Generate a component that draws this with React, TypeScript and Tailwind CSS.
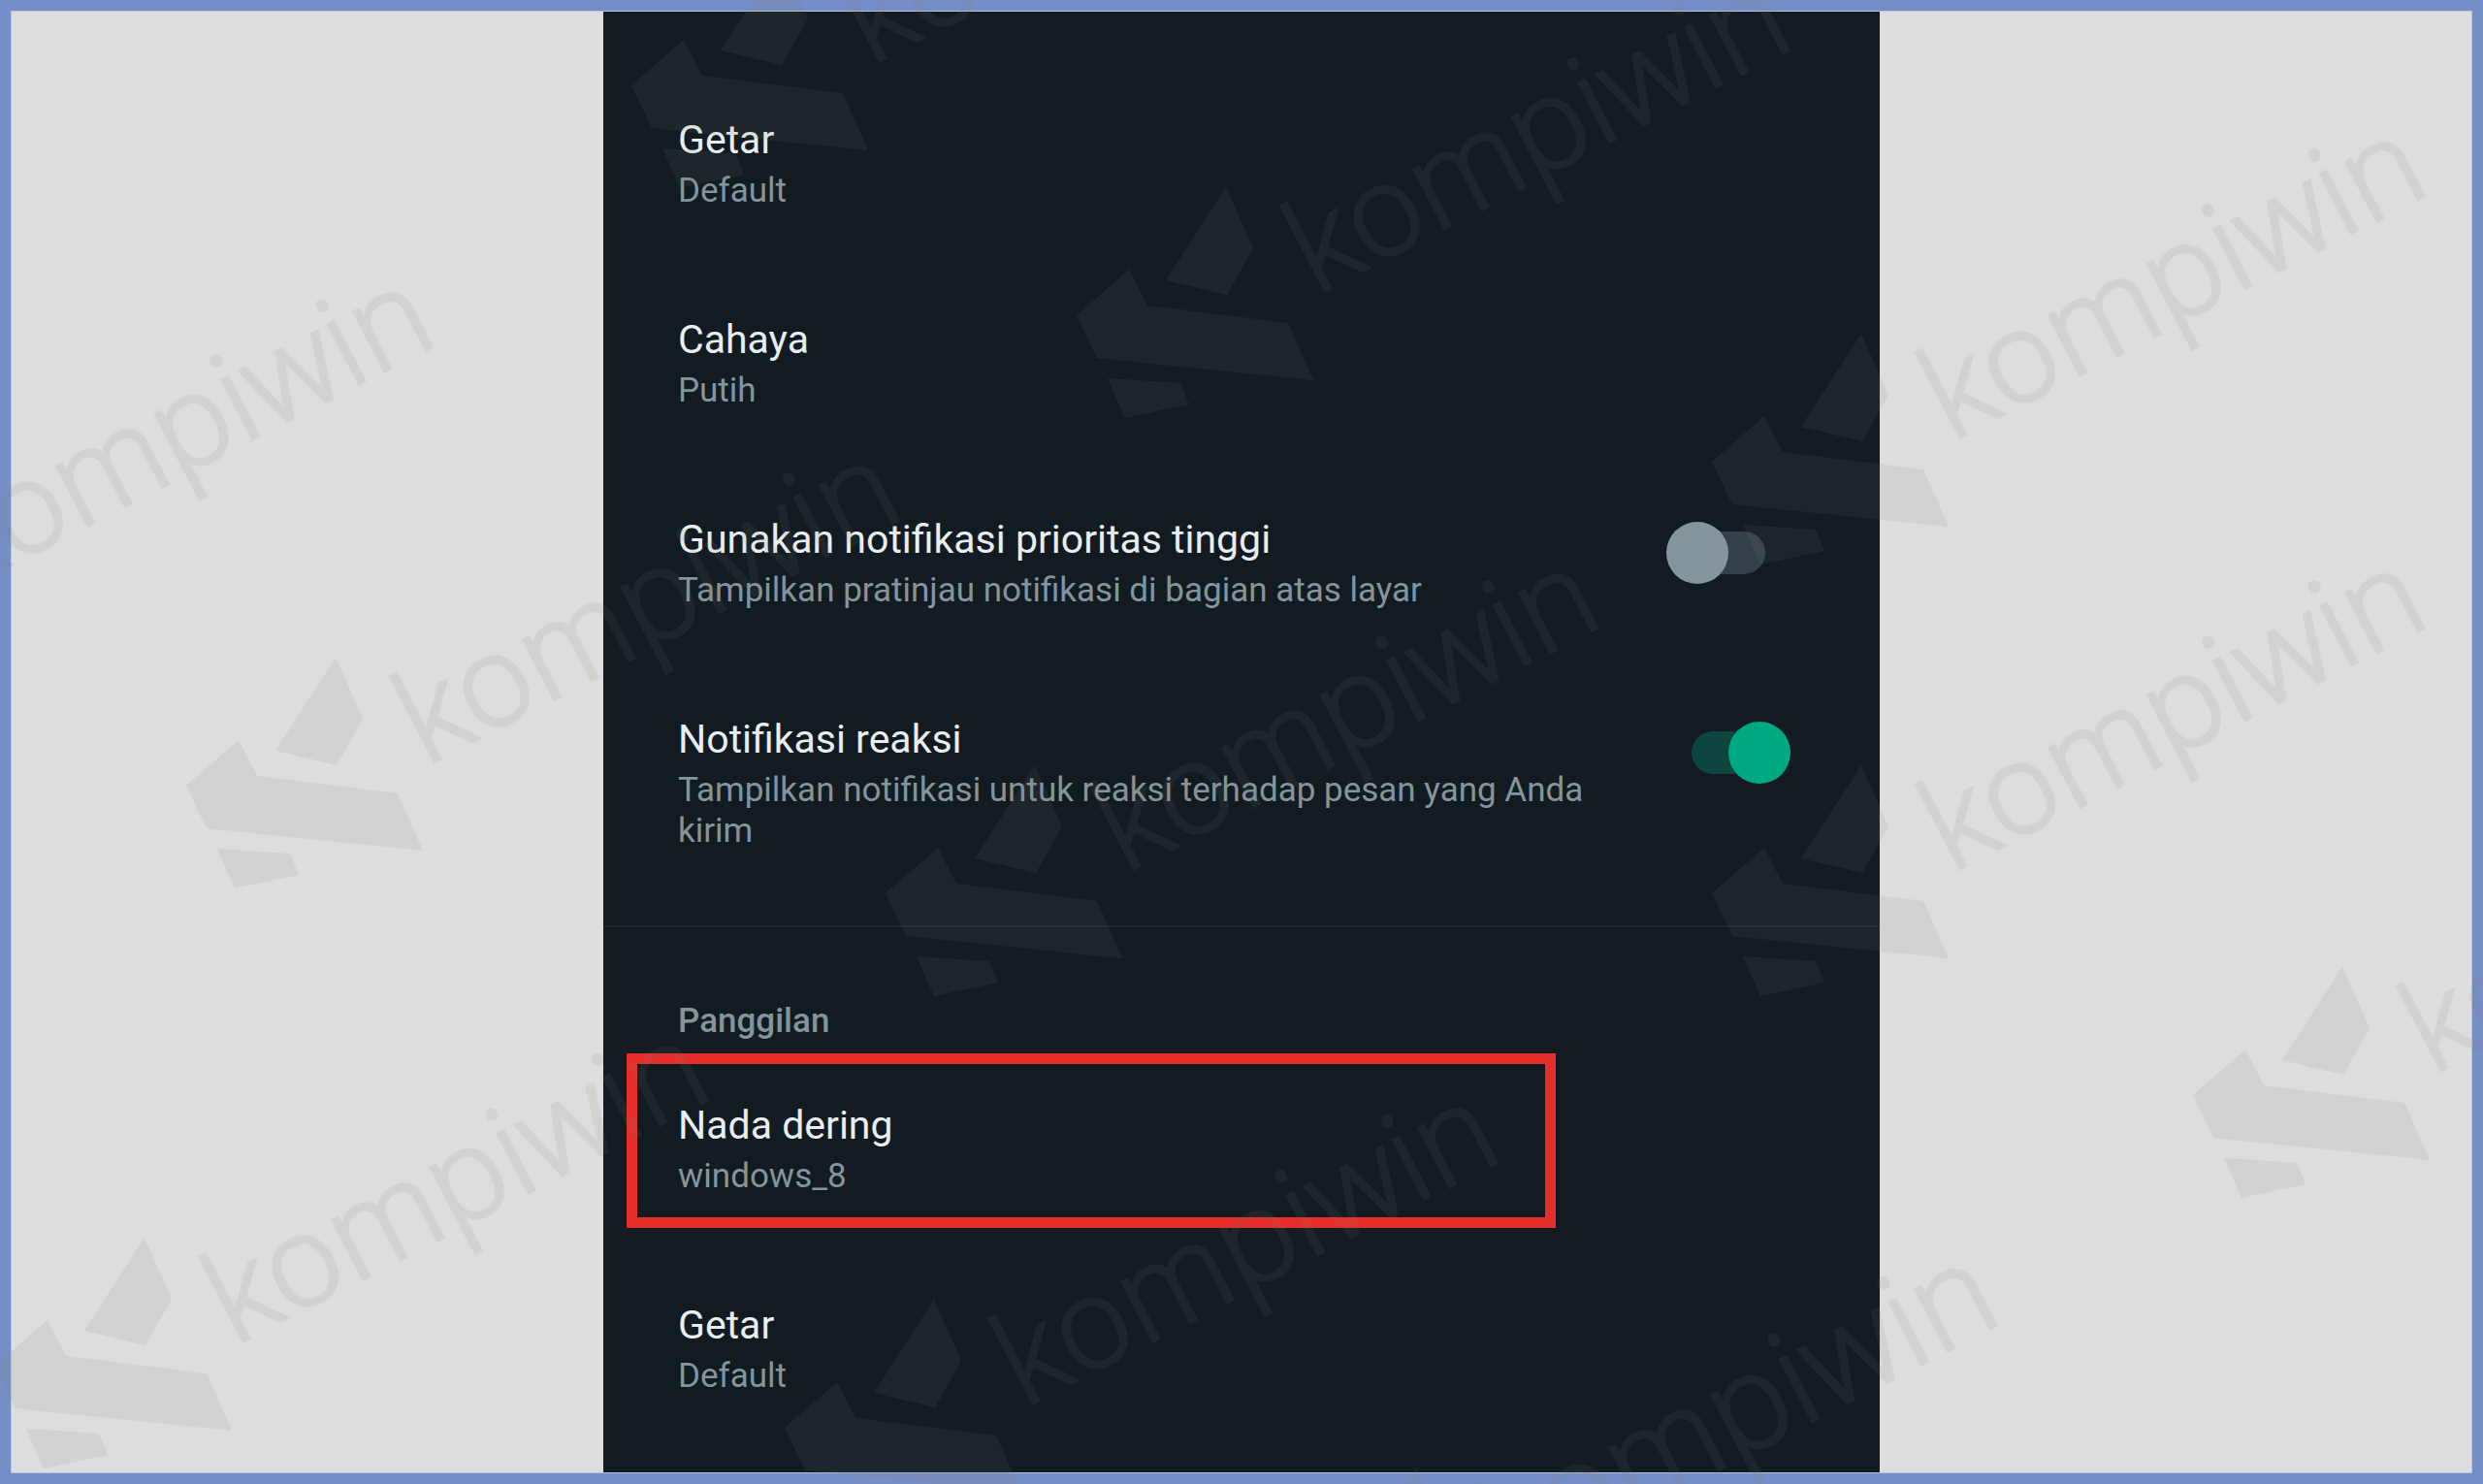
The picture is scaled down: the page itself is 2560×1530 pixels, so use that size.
import React, { useState } from 'react';

const marks = [
  { x: 805, y: -44, scale: 1 },
  { x: 1264, y: 193, scale: 1 },
  { x: -135, y: 499, scale: 1 },
  { x: 1919, y: 344, scale: 1 },
  { x: 346, y: 678, scale: 1 },
  { x: 1067, y: 789, scale: 1 },
  { x: 1919, y: 789, scale: 1 },
  { x: 2415, y: 997, scale: 1 },
  { x: 149, y: 1276, scale: 1 },
  { x: 963, y: 1340, scale: 1 },
  { x: 1461, y: 1513, scale: 1.03 },
];

const Watermark = () => (
  <svg
    aria-hidden="true"
    className="pointer-events-none absolute inset-0 w-full h-full"
    viewBox="0 0 2560 1530"
    preserveAspectRatio="xMidYMid slice"
    fill="#807c72"
  >
    {marks.map((mark) => (
      <g
        key={`${mark.x}-${mark.y}`}
        transform={`translate(${mark.x} ${mark.y}) scale(${mark.scale})`}
        opacity="0.12"
      >
        <path d="M0 0 L28 63 L1 111 L-62 96 Z" />
        <path d="M-100 85 L-154 132 L-133 176 L90 199 L64 140 L-81 122 Z" />
        <path d="M-122 197 L-47 202 L-38 224 L-104 238 Z" />
        <text
          transform="translate(92 112) rotate(-27.5)"
          stroke="#807c72"
          strokeWidth="3"
          className="font-['Open_Sans',sans-serif] text-[130px] font-light"
        >
          kompiwin
        </text>
      </g>
    ))}
  </svg>
);

type RowTextProps = {
  title: string;
  detail: string;
};

const RowText = ({ title, detail }: RowTextProps) => (
  <>
    <span className="block text-[41px] leading-14 text-[#e8edf0]">{title}</span>
    <span className="mt-1 block text-[35px] leading-[42px] text-[#84949d]">{detail}</span>
  </>
);

const Row = ({ title, detail }: RowTextProps) => (
  <button type="button" className="block w-full px-[77px] py-13 text-left">
    <RowText title={title} detail={detail} />
  </button>
);

type SwitchRowProps = RowTextProps & {
  id: string;
  defaultOn?: boolean;
};

const SwitchRow = ({ id, title, detail, defaultOn = false }: SwitchRowProps) => {
  const [on, setOn] = useState(defaultOn);

  return (
    <div className="flex items-start justify-between py-13 pl-[77px] pr-[92px]">
      <label htmlFor={id} className="max-w-[960px]">
        <RowText title={title} detail={detail} />
      </label>
      <span className="relative mt-2.5 flex h-16 w-32 shrink-0 items-center">
        <input
          id={id}
          type="checkbox"
          role="switch"
          checked={on}
          onChange={(e) => setOn(e.target.checked)}
          className="peer mx-auto h-11 w-19 appearance-none rounded-full bg-[#35414a] checked:bg-[#0c463f]"
        />
        <span className="pointer-events-none absolute left-0 size-16 rounded-full bg-[#84959e] peer-checked:left-16 peer-checked:bg-[#00a884]" />
      </span>
    </div>
  );
};

const App = () => {
  return (
    <div className="relative flex min-h-screen flex-col overflow-hidden bg-[#768ec8] p-[11px] font-[Roboto,sans-serif]">
      <div className="flex flex-1 flex-col border border-[#b5c1dd] bg-[#dddddd]">
        <main className="mx-auto w-full max-w-[1316px] flex-1 bg-[#131b22] pt-13">
          {/* Notifications */}
          <section>
            <Row title="Getar" detail="Default" />
            <Row title="Cahaya" detail="Putih" />
            <SwitchRow
              id="priority"
              title="Gunakan notifikasi prioritas tinggi"
              detail="Tampilkan pratinjau notifikasi di bagian atas layar"
            />
            <SwitchRow
              id="reactions"
              title="Notifikasi reaksi"
              detail="Tampilkan notifikasi untuk reaksi terhadap pesan yang Anda kirim"
              defaultOn
            />
          </section>

          {/* Calls */}
          <section className="mt-6 border-t-2 border-[#1e272d] pt-19">
            <h2 className="mb-1.5 px-[77px] text-[35px] leading-[42px] font-medium text-[#84949d]">Panggilan</h2>
            <div className="relative">
              <Row title="Nada dering" detail="windows_8" />
              <div className="pointer-events-none absolute top-1.5 left-6 h-45 w-[958px] max-w-full border-11 border-[#e62d29]" />
            </div>
            <Row title="Getar" detail="Default" />
          </section>
        </main>
      </div>
      <Watermark />
    </div>
  );
};

export default App;
